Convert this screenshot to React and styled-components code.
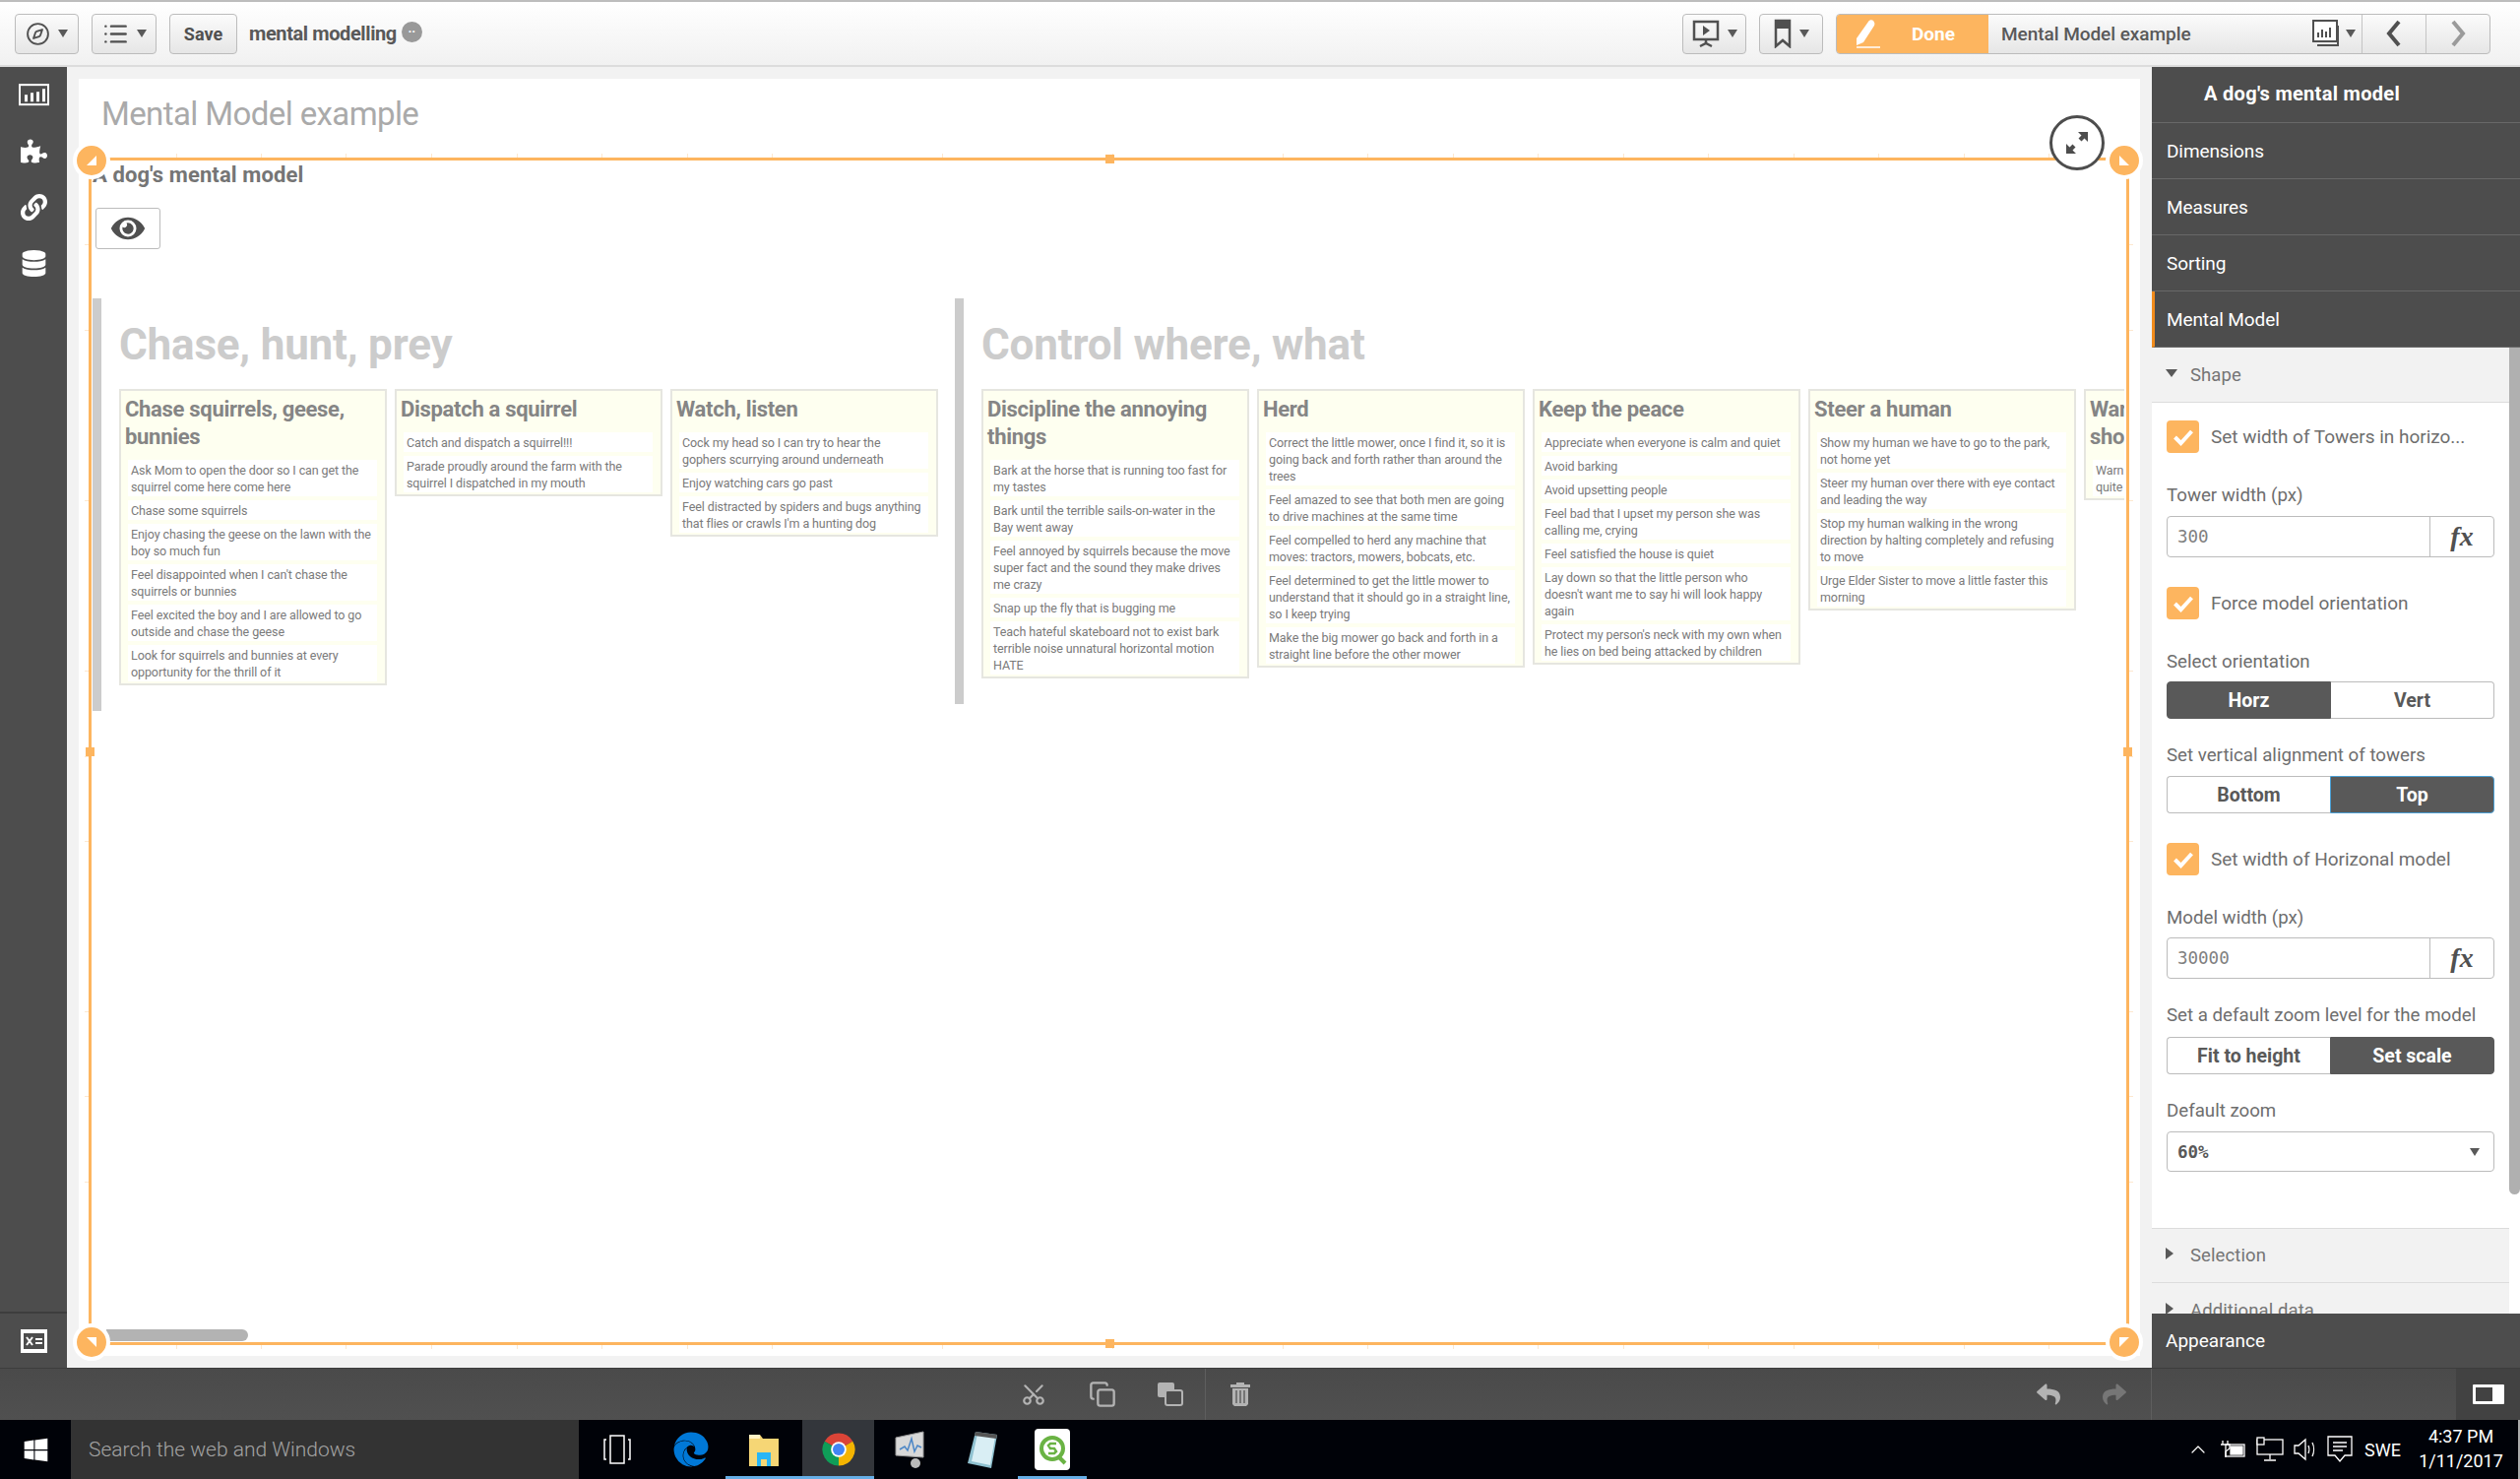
import styled, { createGlobalStyle } from "styled-components";
import { FaPuzzlePiece, FaLink, FaDatabase, FaEye, FaWindows, FaEdge, FaReply, FaShare } from "react-icons/fa";
import { Compass, List, Copy, ChevronUp, Scissors } from "lucide-react";

const sans = `Roboto, "Liberation Sans", sans-serif`;
const orange = "#fdb55f";

const towers = [
  {
    title: "Chase, hunt, prey",
    cards: [
      {
        title: "Chase squirrels, geese, bunnies",
        items: [
          "Ask Mom to open the door so I can get the squirrel come here come here",
          "Chase some squirrels",
          "Enjoy chasing the geese on the lawn with the boy so much fun",
          "Feel disappointed when I can't chase the squirrels or bunnies",
          "Feel excited the boy and I are allowed to go outside and chase the geese",
          "Look for squirrels and bunnies at every opportunity for the thrill of it",
        ],
      },
      {
        title: "Dispatch a squirrel",
        items: ["Catch and dispatch a squirrel!!!", "Parade proudly around the farm with the squirrel I dispatched in my mouth"],
      },
      {
        title: "Watch, listen",
        items: [
          "Cock my head so I can try to hear the gophers scurrying around underneath",
          "Enjoy watching cars go past",
          "Feel distracted by spiders and bugs anything that flies or crawls I'm a hunting dog",
        ],
      },
    ],
  },
  {
    title: "Control where, what",
    cards: [
      {
        title: "Discipline the annoying things",
        items: [
          "Bark at the horse that is running too fast for my tastes",
          "Bark until the terrible sails-on-water in the Bay went away",
          "Feel annoyed by squirrels because the move super fact and the sound they make drives me crazy",
          "Snap up the fly that is bugging me",
          "Teach hateful skateboard not to exist bark terrible noise unnatural horizontal motion HATE",
        ],
      },
      {
        title: "Herd",
        items: [
          "Correct the little mower, once I find it, so it is going back and forth rather than around the trees",
          "Feel amazed to see that both men are going to drive machines at the same time",
          "Feel compelled to herd any machine that moves: tractors, mowers, bobcats, etc.",
          "Feel determined to get the little mower to understand that it should go in a straight line, so I keep trying",
          "Make the big mower go back and forth in a straight line before the other mower",
        ],
      },
      {
        title: "Keep the peace",
        items: [
          "Appreciate when everyone is calm and quiet",
          "Avoid barking",
          "Avoid upsetting people",
          "Feel bad that I upset my person she was calling me, crying",
          "Feel satisfied the house is quiet",
          "Lay down so that the little person who doesn't want me to say hi will look happy again",
          "Protect my person's neck with my own when he lies on bed being attacked by children",
        ],
      },
      {
        title: "Steer a human",
        items: [
          "Show my human we have to go to the park, not home yet",
          "Steer my human over there with eye contact and leading the way",
          "Stop my human walking in the wrong direction by halting completely and refusing to move",
          "Urge Elder Sister to move a little faster this morning",
        ],
      },
      {
        title: "Warn the family\nshould danger come",
        items: ["Warn my person when something is\nquite wrong"],
      },
    ],
  },
];

const Global = createGlobalStyle`
  html, body { margin: 0; padding: 0; background: #fff; }
  * { box-sizing: border-box; }
`;

const Page = styled.div`
  width: 2560px;
  height: 1502px;
  display: flex;
  flex-direction: column;
  overflow: hidden;
  font-family: ${sans};
`;

const Toolbar = styled.div`
  height: 68px;
  flex: none;
  display: flex;
  align-items: center;
  gap: 13px;
  padding: 0 30px 0 15px;
  border-top: 2px solid #bdbdbd;
  border-bottom: 2px solid #dcdcdc;
  background: linear-gradient(#fff, #f1f1f1);
`;

const ToolButton = styled.div`
  height: 41px;
  width: ${(p) => p.$w || 65}px;
  display: flex;
  align-items: center;
  justify-content: center;
  gap: 8px;
  flex: none;
  border: 1px solid #bcbcbc;
  border-radius: 4px;
  background: linear-gradient(#fbfbfb, #e6e6e6);
  color: #505050;
  font-weight: 700;
  font-size: 18px;
`;

const Caret = styled.span`
  width: 0;
  height: 0;
  border-left: 5px solid transparent;
  border-right: 5px solid transparent;
  border-top: 8px solid ${(p) => p.$c || "#595959"};
`;

const AppName = styled.div`
  margin-left: -1px;
  font-size: 20px;
  font-weight: 700;
  letter-spacing: -0.4px;
  color: #595959;
`;

const Dots = styled.span`
  width: 21px;
  height: 21px;
  border-radius: 50%;
  background: #999;
  margin: -4px 0 0 -8px;
  display: flex;
  align-items: center;
  justify-content: center;
  color: #fff;
  font-size: 13px;
  font-weight: 700;
  line-height: 8px;
`;

const Spacer = styled.div`
  flex: 1;
`;

const SheetNav = styled.div`
  width: 665px;
  height: 41px;
  display: flex;
  border: 1px solid #bcbcbc;
  border-radius: 4px;
  overflow: hidden;
  background: linear-gradient(#fbfbfb, #e6e6e6);
`;

const DoneButton = styled.div`
  width: 154px;
  display: flex;
  align-items: center;
  padding-left: 17px;
  gap: 31px;
  background: ${orange};
  color: #fff;
  font-size: 19px;
  font-weight: 700;
`;

const SheetName = styled.div`
  flex: 1;
  display: flex;
  align-items: center;
  gap: 6px;
  padding: 0 6px 0 13px;
  color: #595959;
  font-size: 19px;
  font-weight: 500;
  letter-spacing: -0.05px;
  span:first-child {
    flex: 1;
  }
`;

const NavArrow = styled.div`
  width: 65px;
  display: flex;
  align-items: center;
  justify-content: center;
  border-left: 1px solid #c4c4c4;
`;

const Main = styled.div`
  flex: none;
  height: 1321px;
  display: flex;
`;

const Rail = styled.div`
  width: 68px;
  flex: none;
  background: #4d4d4d;
  display: flex;
  flex-direction: column;
  align-items: center;
`;

const RailIcon = styled.div`
  height: 57px;
  width: 100%;
  flex: none;
  display: flex;
  align-items: center;
  justify-content: center;
  color: #fff;
  font-size: 27px;
`;

const RailFoot = styled.div`
  margin-top: auto;
  width: 100%;
  height: 57px;
  display: flex;
  align-items: center;
  justify-content: center;
  border-top: 2px solid #3d3d3d;
`;

const Canvas = styled.div`
  flex: 1;
  background: #f2f2f2;
  padding: 12px 12px 12px;
  display: flex;
`;

const Sheet = styled.div`
  flex: 1;
  background: #fff;
  display: flex;
  flex-direction: column;
  min-width: 0;
`;

const SheetTitle = styled.div`
  height: 80px;
  flex: none;
  padding: 14px 0 0 23px;
  color: #aaa;
  font-size: 33px;
  line-height: 44px;
  letter-spacing: -0.6px;
  font-weight: 400;
`;

const Frame = styled.div`
  position: relative;
  flex: 1;
  margin: 0 11px 11px 10px;
  border: 3px solid ${orange};
  min-height: 0;
`;

const Clip = styled.div`
  position: absolute;
  inset: 0 2px 0 0;
  overflow: hidden;
`;

const ChartTitle = styled.div`
  margin: 1px 0 0 1px;
  height: 28px;
  line-height: 28px;
  font-size: 22px;
  font-weight: 700;
  letter-spacing: 0.1px;
  color: #757575;
`;

const EyeButton = styled.div`
  margin: 19px 0 0 4px;
  width: 66px;
  height: 42px;
  border: 1px solid #bcbcbc;
  border-radius: 3px;
  display: flex;
  align-items: center;
  justify-content: center;
  color: #505050;
  font-size: 34px;
`;

const Towers = styled.div`
  margin: 50px 0 0 1px;
  display: flex;
  align-items: flex-start;
  gap: 17px;
  width: max-content;
`;

const Tower = styled.div`
  border-left: 9px solid #ccc;
  padding: 0 0 26px 18px;
`;

const TowerTitle = styled.div`
  height: 92px;
  line-height: 94px;
  font-size: 44px;
  font-weight: 700;
  letter-spacing: -0.2px;
  color: #ccc;
`;

const Cards = styled.div`
  display: flex;
  align-items: flex-start;
  gap: 8px;
`;

const Card = styled.div`
  width: 272px;
  background: #fefff0;
  border: 2px solid #e6e6e0;
  padding: 5px 8px 2px 7px;
`;

const CardTitle = styled.div`
  margin: 0 0 9px -3px;
  font-size: 22px;
  font-weight: 700;
  line-height: 28px;
  letter-spacing: -0.3px;
  color: #858585;
  white-space: pre-line;
`;

const Items = styled.div`
  display: flex;
  flex-direction: column;
  gap: 4px;
`;

const Item = styled.div`
  background: #fff;
  padding: 1.5px 2px 1.5px 3px;
  font-size: 12.5px;
  line-height: 17px;
  letter-spacing: -0.1px;
  color: #7a7a7a;
  white-space: pre-line;
`;

const ScrollThumb = styled.div`
  position: absolute;
  left: 15px;
  bottom: 1px;
  width: 144px;
  height: 12px;
  background: #b3b3b3;
  border-radius: 0 6px 6px 0;
`;

const Ticks = styled.div`
  position: absolute;
  pointer-events: none;
  ${(p) => p.$side === "top" && "left: 0; right: 0; top: -7px; height: 4px;"}
  ${(p) => p.$side === "bottom" && "left: 0; right: 0; bottom: -7px; height: 4px;"}
  ${(p) => p.$side === "left" && "top: 0; bottom: 0; left: -7px; width: 4px;"}
  ${(p) => p.$side === "right" && "top: 0; bottom: 0; right: -7px; width: 4px;"}
  background: repeating-linear-gradient(
    ${(p) => (p.$side === "top" || p.$side === "bottom" ? "to right" : "to bottom")},
    transparent 0 85.5px,
    #fde8cf 85.5px 86.5px
  );
`;

const CornerHandle = styled.div`
  position: absolute;
  ${(p) => (p.$y === "t" ? "top: -19px;" : "bottom: -19px;")}
  ${(p) => (p.$x === "l" ? "left: -19px;" : "right: -17px;")}
  width: 38px;
  height: 38px;
  border-radius: 50%;
  background: ${orange};
  border: 4px solid #fff;
  display: flex;
  align-items: center;
  justify-content: center;
`;

const EdgeHandle = styled.div`
  position: absolute;
  width: 9px;
  height: 9px;
  background: ${orange};
  ${(p) => p.$pos === "top" && "top: -6px; left: calc(50% - 4px);"}
  ${(p) => p.$pos === "bottom" && "bottom: -6px; left: calc(50% - 4px);"}
  ${(p) => p.$pos === "left" && "left: -6px; top: calc(50% - 4px);"}
  ${(p) => p.$pos === "right" && "right: -6px; top: calc(50% - 4px);"}
`;

const ExpandButton = styled.div`
  position: absolute;
  top: -46px;
  right: 22px;
  width: 56px;
  height: 56px;
  border-radius: 50%;
  border: 3px solid #4d4d4d;
  background: #fff;
  display: flex;
  align-items: center;
  justify-content: center;
`;

const Panel = styled.div`
  width: 374px;
  flex: none;
  display: flex;
  flex-direction: column;
  background: #fff;
`;

const PanelRow = styled.div`
  height: 57px;
  flex: none;
  display: flex;
  align-items: center;
  padding-left: ${(p) => (p.$head ? 53 : p.$active ? 12 : 15)}px;
  ${(p) => p.$head && "padding-bottom: 2px;"}
  background: #4d4d4d;
  border-bottom: 1px solid #686868;
  ${(p) => p.$active && `border-left: 3px solid #f28c1c;`}
  color: #fff;
  font-size: ${(p) => (p.$head ? 20 : 19)}px;
  font-weight: ${(p) => (p.$head ? 700 : 400)};
  letter-spacing: ${(p) => (p.$head ? "0.3px" : "-0.1px")};
`;

const PanelBody = styled.div`
  flex: 1;
  min-height: 0;
  display: flex;
  overflow: hidden;
`;

const PanelScroll = styled.div`
  width: 363px;
  flex: none;
`;

const PanelThumb = styled.div`
  width: 11px;
  height: 860px;
  background: #b0b0b0;
  border-radius: 0 0 6px 6px;
`;

const Accordion = styled.div`
  height: 56px;
  display: flex;
  align-items: center;
  gap: ${(p) => (p.$open ? 13 : 17)}px;
  padding-left: 14px;
  background: #f2f2f2;
  border-bottom: 1px solid #dcdcdc;
  ${(p) => p.$top && "border-top: 1px solid #dcdcdc;"}
  color: #757575;
  font-size: 18.5px;
  letter-spacing: 0.1px;
`;

const Arrow = styled.span`
  width: 0;
  height: 0;
  margin-top: -4px;
  ${(p) =>
    p.$open
      ? "border-left: 6px solid transparent; border-right: 6px solid transparent; border-top: 8px solid #595959;"
      : "border-top: 6px solid transparent; border-bottom: 6px solid transparent; border-left: 8px solid #595959;"}
`;

const Fields = styled.div`
  height: 838px;
  padding: 18px 15px 0;
`;

const CheckRow = styled.div`
  margin-top: ${(p) => p.$mt || 0}px;
  height: 33px;
  display: flex;
  align-items: center;
  gap: 12px;
  color: #6e6e6e;
  font-size: 19px;
  letter-spacing: -0.02px;
`;

const CheckBox = styled.span`
  width: 33px;
  height: 33px;
  flex: none;
  border-radius: 4px;
  background: ${orange};
  display: flex;
  align-items: center;
  justify-content: center;
`;

const FieldLabel = styled.div`
  margin: ${(p) => p.$mt}px 0 ${(p) => p.$mb}px;
  height: 24px;
  line-height: 24px;
  color: #6e6e6e;
  font-size: 18.7px;
`;

const InputBox = styled.div`
  height: 42px;
  display: flex;
  border: 1px solid #bcbcbc;
  border-radius: 4px;
`;

const InputValue = styled.div`
  flex: 1;
  padding-left: 10px;
  display: flex;
  align-items: center;
  font-family: "DejaVu Sans Mono", monospace;
  font-size: 17.5px;
  color: #808080;
`;

const FxButton = styled.div`
  width: 65px;
  border-left: 1px solid #bcbcbc;
  display: flex;
  align-items: center;
  justify-content: center;
  font-family: "Liberation Serif", serif;
  font-style: italic;
  font-weight: 700;
  font-size: 28px;
  color: #505050;
`;

const Segments = styled.div`
  height: 38px;
  display: flex;
`;

const Segment = styled.div`
  flex: 1;
  display: flex;
  align-items: center;
  justify-content: center;
  font-size: 19.5px;
  font-weight: 700;
  color: ${(p) => (p.$on ? "#fff" : "#595959")};
  background: ${(p) => (p.$on ? "#595959" : "#fff")};
  border: 1px solid ${(p) => (p.$focus ? "#4a9fd4" : p.$on ? "#595959" : "#bcbcbc")};
  border-radius: ${(p) => (p.$first ? "4px 0 0 4px" : "0 4px 4px 0")};
  ${(p) => p.$first && !p.$on && "border-right: none;"}
  ${(p) => !p.$first && !p.$on && "border-left: none;"}
`;

const SelectBox = styled.div`
  height: 41px;
  display: flex;
  align-items: center;
  justify-content: space-between;
  padding: 0 14px 0 10px;
  border: 1px solid #bcbcbc;
  border-radius: 4px;
  font-family: "DejaVu Sans Mono", monospace;
  font-weight: 700;
  font-size: 17.5px;
  color: #595959;
`;

const Appearance = styled.div`
  height: 55px;
  flex: none;
  display: flex;
  align-items: center;
  padding-left: 14px;
  background: #4d4d4d;
  color: #fff;
  font-size: 19px;
`;

const BottomBar = styled.div`
  height: 53px;
  flex: none;
  display: flex;
  background: linear-gradient(#4a4a4a, #505050);
  border-top: 1px solid #3d3d3d;
`;

const EditTools = styled.div`
  width: 2186px;
  flex: none;
  display: flex;
  align-items: center;
  border-right: 1px solid #5e5e5e;
  padding-left: 1015px;
  color: #b3b3b3;
`;

const EditIcon = styled.div`
  width: ${(p) => p.$w || 70}px;
  display: flex;
  justify-content: center;
  font-size: 24px;
  color: ${(p) => p.$c || "#b3b3b3"};
`;

const ToolDivider = styled.div`
  width: 1px;
  height: 53px;
  background: #5e5e5e;
`;

const ScissorWrap = styled.span`
  display: flex;
  transform: rotate(-90deg);
`;

const PanelToggle = styled.div`
  margin-left: auto;
  width: 65px;
  background: #424242;
  display: flex;
  align-items: center;
  justify-content: center;
`;

const ToggleIcon = styled.div`
  width: 32px;
  height: 20px;
  background: #fff;
  border-radius: 1px;
  padding: 3px 12px 3px 3px;
  &::before {
    content: "";
    display: block;
    height: 100%;
    background: #424242;
  }
`;

const Taskbar = styled.div`
  flex: 1;
  display: flex;
  align-items: stretch;
  background: #000208;
  color: #fff;
`;

const StartButton = styled.div`
  width: 72px;
  display: flex;
  align-items: center;
  justify-content: center;
  font-size: 27px;
`;

const SearchBox = styled.div`
  width: 516px;
  background: #333;
  display: flex;
  align-items: center;
  padding-left: 18px;
  color: #a3a3a3;
  font-size: 21px;
  font-weight: 300;
`;

const TaskIcon = styled.div`
  width: ${(p) => p.$w || 73}px;
  display: flex;
  align-items: center;
  justify-content: center;
  font-size: 36px;
  color: ${(p) => p.$c || "inherit"};
  background: ${(p) => (p.$on ? "#33363b" : "transparent")};
  box-shadow: ${(p) => (p.$run ? "inset 0 -3px 0 #66aee6" : "none")};
`;

const Tray = styled.div`
  margin-left: auto;
  display: flex;
  align-items: center;
  gap: 9px;
  padding-right: 7px;
`;

const TrayLabel = styled.div`
  font-size: 18px;
  margin-left: 3px;
`;

const Clock = styled.div`
  width: 104px;
  text-align: center;
  font-size: 18px;
  line-height: 25px;
  margin-top: -3px;
`;

const ShowDesktop = styled.div`
  width: 2px;
  background: #aaa;
  margin-left: -1px;
`;

const ChartGlyph = ({ size = 31 }) => (
  <svg width={size} height={size * 0.72} viewBox="0 0 31 22">
    <rect x="1" y="1" width="29" height="20" fill="none" stroke="#fff" strokeWidth="2" />
    <path d="M6 18v-7h3v7zM12 18v-9h3v9zM18 18v-10h3v10zM24 18v-13h3v13z" fill="#fff" />
  </svg>
);

const FormulaGlyph = () => (
  <svg width="27" height="24" viewBox="0 0 27 24">
    <rect width="27" height="24" fill="#fff" />
    <rect x="3" y="4" width="21" height="16" fill="#4d4d4d" />
    <path d="M6 8l6 8M12 8l-6 8" stroke="#fff" strokeWidth="2" />
    <path d="M15 10h7M15 14h7" stroke="#fff" strokeWidth="2" />
  </svg>
);

const Present = () => (
  <svg width="28" height="29" viewBox="0 0 28 29">
    <rect x="2" y="2" width="24" height="18" fill="none" stroke="#505050" strokeWidth="2.5" />
    <path d="M11 6l7 5-7 5z" fill="#505050" />
    <path d="M14 20v5M8 27l6-3 6 3" fill="none" stroke="#505050" strokeWidth="2.5" />
  </svg>
);

const Bookmark = () => (
  <svg width="18" height="30" viewBox="0 0 18 30">
    <path d="M2 2h14v26l-7-6-7 6z" fill="none" stroke="#505050" strokeWidth="2.5" />
    <path d="M2 2h14v8H2z" fill="#505050" />
  </svg>
);

const Pencil = () => (
  <svg width="28" height="30" viewBox="0 0 28 30">
    <path d="M3 20L15 3c1-2 4-2 5-1s2 3 1 5L10 24l-7 3z" fill="#fff" />
    <path d="M3 29h24" stroke="#fff" strokeWidth="1.5" />
  </svg>
);

const SheetsGlyph = () => (
  <svg width="28" height="28" viewBox="0 0 28 28">
    <rect x="1" y="1" width="24" height="21" fill="#fff" stroke="#505050" strokeWidth="2" />
    <path d="M5 26h21V6" fill="none" stroke="#505050" strokeWidth="2" />
    <path d="M5 18v-5h2v5zM9 18v-8h2v8zM13 18v-6h2v6zM17 18v-10h2v10z" fill="#505050" />
  </svg>
);

const Chevron = ({ dir, color }) => (
  <svg width="16" height="28" viewBox="0 0 16 28">
    <path d={dir === "left" ? "M13 2L3 14l10 12" : "M3 2l10 12L3 26"} fill="none" stroke={color} strokeWidth="4" />
  </svg>
);

const ExpandGlyph = () => (
  <svg width="26" height="26" viewBox="0 0 26 26" fill="#4d4d4d">
    <path d="M14 2h10v10l-3.500-3.500-3 3-3-3 3-3zM12 24H2V14l3.500 3.500 3-3 3 3-3 3z" />
  </svg>
);

const Check = () => (
  <svg width="22" height="18" viewBox="0 0 22 18">
    <path d="M2.500 9l6 6L19.500 3" fill="none" stroke="#fff" strokeWidth="4" />
  </svg>
);

const corners = { tl: "12,2 12,12 2,12", tr: "2,2 2,12 12,12", bl: "2,2 12,2 12,12", br: "2,2 12,2 2,12" };
const Corner = ({ x, y }) => (
  <CornerHandle $x={x} $y={y}>
    <svg width="14" height="14" viewBox="0 0 14 14">
      <polygon points={corners[y + x]} fill="#fff" />
    </svg>
  </CornerHandle>
);

const Duplicate = () => (
  <svg width="26" height="24" viewBox="0 0 26 24">
    <rect x="0" y="0" width="17" height="15" rx="2" fill="#b3b3b3" />
    <rect x="8" y="8" width="17" height="15" rx="2" fill="#4d4d4d" stroke="#b3b3b3" strokeWidth="2" />
  </svg>
);

const TrashCan = () => (
  <svg width="20" height="24" viewBox="0 0 20 24" fill="#b3b3b3">
    <path d="M6 0h8v2h6v3H0V2h6z" />
    <path d="M2 6h16v16l-2 2H4l-2-2z" />
    <path d="M6 8v13M10 8v13M14 8v13" stroke="#4d4d4d" strokeWidth="1.200" />
  </svg>
);

const Folder = () => (
  <svg width="32" height="38" viewBox="0 0 32 38">
    <path d="M1 4h11l3 4h16v28H1z" fill="#f6d675" />
    <path d="M1 4h11v4H1z" fill="#fff3c4" />
    <path d="M9 36V22h14v14h-4v-7h-6v7z" fill="#29b6f6" />
  </svg>
);

const Chrome = () => (
  <svg width="36" height="36" viewBox="0 0 24 24">
    <path d="M12 12L2.470 6.500A11 11 0 0 1 21.530 6.500z" fill="#db4437" />
    <path d="M12 12L21.530 6.500A11 11 0 0 1 12 23z" fill="#f4b400" />
    <path d="M12 12L12 23A11 11 0 0 1 2.470 6.500z" fill="#0f9d58" />
    <circle cx="12" cy="12" r="5.200" fill="#fff" />
    <circle cx="12" cy="12" r="4" fill="#4285f4" />
  </svg>
);

const Monitor = () => (
  <svg width="38" height="40" viewBox="0 0 38 40">
    <path d="M4 8l28-6v26L4 26z" fill="#d8d8d8" stroke="#999" />
    <path d="M8 20l5-3 3 4 4-12 3 13 3-6 4 2" fill="none" stroke="#4c86c6" strokeWidth="1.500" />
    <circle cx="24" cy="34" r="5" fill="#bbb" />
  </svg>
);

const Notes = () => (
  <svg width="34" height="40" viewBox="0 0 34 40">
    <path d="M10 2l22 3-6 34-24-5z" fill="#8fc1d0" />
    <path d="M12 4l18 3-5 29-19-4z" fill="#d9eef4" />
    <path d="M10 2l22 3-1 4-22-3z" fill="#555" />
  </svg>
);

const SenseTile = () => (
  <svg width="36" height="42" viewBox="0 0 36 42">
    <rect width="36" height="42" rx="4" fill="#fff" />
    <circle cx="18" cy="20" r="11" fill="none" stroke="#6ab344" strokeWidth="4" />
    <path d="M25 29l6 6" stroke="#6ab344" strokeWidth="4" />
    <path d="M22 15h-6l-2 2 2 3h4l2 3-2 2h-6" fill="none" stroke="#6ab344" strokeWidth="2.500" />
  </svg>
);

const TaskView = () => (
  <svg width="30" height="32" viewBox="0 0 30 32" fill="none" stroke="#fff" strokeWidth="1.500">
    <rect x="8" y="2" width="14" height="28" />
    <path d="M4 6H2v20h2M26 6h2v20h-2" />
  </svg>
);

const Plug = () => (
  <svg width="29" height="20" viewBox="0 0 29 20" fill="none" stroke="#fff" strokeWidth="1.300">
    <path d="M4 1v4M9 1v4M2 5h9v4l-4 3v6" />
    <rect x="7" y="5" width="19" height="12" />
    <rect x="12" y="7" width="12" height="8" fill="#fff" />
  </svg>
);

const Net = () => (
  <svg width="28" height="26" viewBox="0 0 28 26" fill="none" stroke="#fff" strokeWidth="1.300">
    <rect x="1" y="3" width="26" height="15" />
    <path d="M14 18v5M8 24h12" />
    <rect x="1" y="1" width="7" height="7" fill="#000208" />
  </svg>
);

const Speaker = () => (
  <svg width="26" height="24" viewBox="0 0 26 24" fill="none" stroke="#fff" strokeWidth="1.300">
    <path d="M2 8h4l7-6v20l-7-6H2z" />
    <path d="M16 8c1 2 1 6 0 8M20 5c2 4 2 10 0 14" />
  </svg>
);

const Action = () => (
  <svg width="26" height="28" viewBox="0 0 26 28" fill="none" stroke="#fff" strokeWidth="1.300">
    <path d="M1 1h24v19h-7l-5 6-5-6H1z" />
    <path d="M6 7h14M6 11h14M6 15h10" />
  </svg>
);

const Field = ({ label, mt, mb, value }) => (
  <>
    <FieldLabel $mt={mt} $mb={mb}>{label}</FieldLabel>
    <InputBox>
      <InputValue>{value}</InputValue>
      <FxButton>fx</FxButton>
    </InputBox>
  </>
);

const App = () => {
  return (
    <Page>
      <Global />
      <Toolbar>
        <ToolButton>
          <Compass size={25} strokeWidth={1.8} />
          <Caret />
        </ToolButton>
        <ToolButton $w={66}>
          <List size={27} strokeWidth={2.2} />
          <Caret />
        </ToolButton>
        <ToolButton $w={69}>Save</ToolButton>
        <AppName>mental modelling</AppName>
        <Dots>··</Dots>
        <Spacer />
        <ToolButton>
          <Present />
          <Caret />
        </ToolButton>
        <ToolButton>
          <Bookmark />
          <Caret />
        </ToolButton>
        <SheetNav>
          <DoneButton>
            <Pencil />
            Done
          </DoneButton>
          <SheetName>
            <span>Mental Model example</span>
            <SheetsGlyph />
            <Caret />
          </SheetName>
          <NavArrow>
            <Chevron dir="left" color="#505050" />
          </NavArrow>
          <NavArrow>
            <Chevron dir="right" color="#9a9a9a" />
          </NavArrow>
        </SheetNav>
      </Toolbar>

      <Main>
        <Rail>
          <RailIcon>
            <ChartGlyph />
          </RailIcon>
          <RailIcon>
            <FaPuzzlePiece />
          </RailIcon>
          <RailIcon>
            <FaLink />
          </RailIcon>
          <RailIcon>
            <FaDatabase />
          </RailIcon>
          <RailFoot>
            <FormulaGlyph />
          </RailFoot>
        </Rail>

        <Canvas>
          <Sheet>
            <SheetTitle>Mental Model example</SheetTitle>
            <Frame>
              <Clip>
                <ChartTitle>A dog's mental model</ChartTitle>
                <EyeButton>
                  <FaEye />
                </EyeButton>
                <Towers>
                  {towers.map((tower) => (
                    <Tower key={tower.title}>
                      <TowerTitle>{tower.title}</TowerTitle>
                      <Cards>
                        {tower.cards.map((card) => (
                          <Card key={card.title}>
                            <CardTitle>{card.title}</CardTitle>
                            <Items>
                              {card.items.map((item) => (
                                <Item key={item}>{item}</Item>
                              ))}
                            </Items>
                          </Card>
                        ))}
                      </Cards>
                    </Tower>
                  ))}
                </Towers>
                <ScrollThumb />
              </Clip>
              <Ticks $side="top" />
              <Ticks $side="bottom" />
              <Ticks $side="left" />
              <Ticks $side="right" />
              <EdgeHandle $pos="top" />
              <EdgeHandle $pos="bottom" />
              <EdgeHandle $pos="left" />
              <EdgeHandle $pos="right" />
              <Corner x="l" y="t" />
              <Corner x="r" y="t" />
              <Corner x="l" y="b" />
              <Corner x="r" y="b" />
              <ExpandButton>
                <ExpandGlyph />
              </ExpandButton>
            </Frame>
          </Sheet>
        </Canvas>

        <Panel>
          <PanelRow $head>A dog's mental model</PanelRow>
          <PanelRow>Dimensions</PanelRow>
          <PanelRow>Measures</PanelRow>
          <PanelRow>Sorting</PanelRow>
          <PanelRow $active>Mental Model</PanelRow>
          <PanelBody>
            <PanelScroll>
              <Accordion $open>
                <Arrow $open />
                Shape
              </Accordion>
              <Fields>
                <CheckRow>
                  <CheckBox>
                    <Check />
                  </CheckBox>
                  Set width of Towers in horizo...
                </CheckRow>
                <Field label="Tower width (px)" mt={31} mb={9} value="300" />
                <CheckRow $mt={30}>
                  <CheckBox>
                    <Check />
                  </CheckBox>
                  Force model orientation
                </CheckRow>
                <FieldLabel $mt={31} $mb={8}>Select orientation</FieldLabel>
                <Segments>
                  <Segment $first $on>Horz</Segment>
                  <Segment>Vert</Segment>
                </Segments>
                <FieldLabel $mt={25} $mb={9}>Set vertical alignment of towers</FieldLabel>
                <Segments>
                  <Segment $first>Bottom</Segment>
                  <Segment $on $focus>Top</Segment>
                </Segments>
                <CheckRow $mt={30}>
                  <CheckBox>
                    <Check />
                  </CheckBox>
                  Set width of Horizonal model
                </CheckRow>
                <Field label="Model width (px)" mt={31} mb={8} value="30000" />
                <FieldLabel $mt={25} $mb={10}>Set a default zoom level for the model</FieldLabel>
                <Segments>
                  <Segment $first>Fit to height</Segment>
                  <Segment $on>Set scale</Segment>
                </Segments>
                <FieldLabel $mt={25} $mb={9}>Default zoom</FieldLabel>
                <SelectBox>
                  60%
                  <Caret />
                </SelectBox>
              </Fields>
              <Accordion $top>
                <Arrow />
                Selection
              </Accordion>
              <Accordion>
                <Arrow />
                Additional data
              </Accordion>
            </PanelScroll>
            <PanelThumb />
          </PanelBody>
          <Appearance>Appearance</Appearance>
        </Panel>
      </Main>

      <BottomBar>
        <EditTools>
          <EditIcon>
            <ScissorWrap>
              <Scissors size={26} />
            </ScissorWrap>
          </EditIcon>
          <EditIcon>
            <Copy size={28} />
          </EditIcon>
          <EditIcon>
            <Duplicate />
          </EditIcon>
          <ToolDivider />
          <EditIcon>
            <TrashCan />
          </EditIcon>
          <EditIcon $w={759} />
          <EditIcon $w={60}>
            <FaReply />
          </EditIcon>
          <EditIcon $w={74} $c="#767676">
            <FaShare />
          </EditIcon>
        </EditTools>
        <PanelToggle>
          <ToggleIcon />
        </PanelToggle>
      </BottomBar>

      <Taskbar>
        <StartButton>
          <FaWindows />
        </StartButton>
        <SearchBox>Search the web and Windows</SearchBox>
        <TaskIcon $w={78}>
          <TaskView />
        </TaskIcon>
        <TaskIcon $w={71} $c="#0078d7">
          <FaEdge />
        </TaskIcon>
        <TaskIcon $w={78} $run>
          <Folder />
        </TaskIcon>
        <TaskIcon $on $run>
          <Chrome />
        </TaskIcon>
        <TaskIcon>
          <Monitor />
        </TaskIcon>
        <TaskIcon>
          <Notes />
        </TaskIcon>
        <TaskIcon $w={70} $run>
          <SenseTile />
        </TaskIcon>
        <Tray>
          <ChevronUp size={24} strokeWidth={1.2} />
          <Plug />
          <Net />
          <Speaker />
          <Action />
          <TrayLabel>SWE</TrayLabel>
          <Clock>
            4:37 PM
            <br />
            1/11/2017
          </Clock>
        </Tray>
        <ShowDesktop />
      </Taskbar>
    </Page>
  );
};

export default App;
